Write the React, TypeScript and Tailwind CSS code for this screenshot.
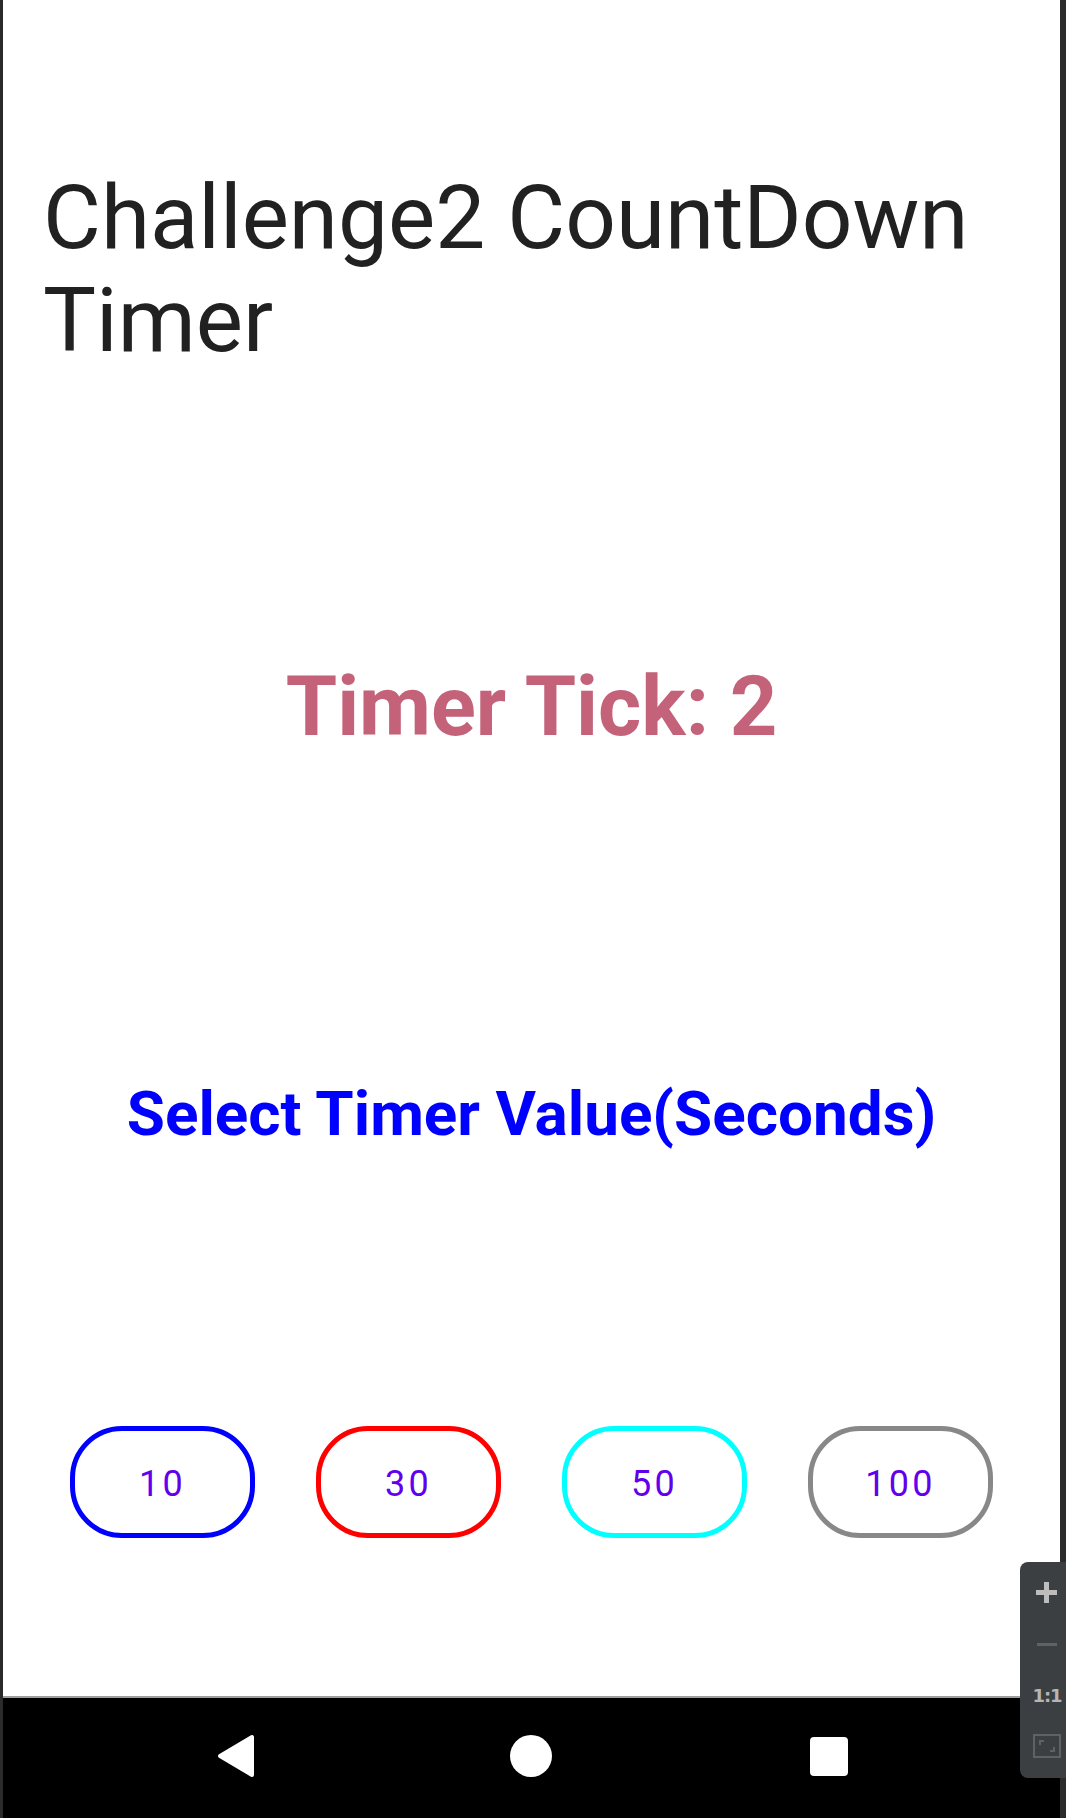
import React from 'react'

const timerOptions = [
  { value: 10, border: 'border-[#0000ff]' },
  { value: 30, border: 'border-[#ff0000]' },
  { value: 50, border: 'border-[#00ffff]' },
  { value: 100, border: 'border-[#888888]' },
]

function NavBar() {
  return (
    <div className="relative h-[122px] w-full bg-black border-t-2 border-[#9e9e9e]">
      <div className="flex h-full items-center pl-[213px]">
        {/* back */}
        <svg width="40" height="44" viewBox="0 0 40 44" className="mt-[-4px]">
          <path d="M4 22 L36 3 L36 41 Z" fill="#fff" stroke="#fff" strokeWidth="4" strokeLinejoin="round" />
        </svg>
        {/* home */}
        <div className="ml-[254px] mt-[-4px] h-[42px] w-[42px] rounded-full bg-white" />
        {/* recents */}
        <div className="ml-[258px] mt-[-4px] h-[39px] w-[38px] rounded-[4px] bg-white" />
      </div>
    </div>
  )
}

function ZoomPanel() {
  return (
    <div className="absolute left-[1020px] top-[1562px] flex h-[216px] w-[46px] flex-col items-center rounded-l-[8px] bg-[#3c3f41] pl-[8px]">
      <svg width="22" height="22" viewBox="0 0 22 22" className="mt-[20px]">
        <rect x="8" y="0" width="5" height="21" fill="#bdbdbd" />
        <rect x="0" y="8" width="21" height="5" fill="#bdbdbd" />
      </svg>
      <div className="mt-[39px] h-[3px] w-[20px] bg-[#5f6163]" />
      <div className="mt-[40px] text-[18px] font-bold leading-[20px] tracking-[-1px] text-[#b5b5b5]" style={{ fontFamily: '"DejaVu Sans", sans-serif' }}>
        1:1
      </div>
      <div className="relative mt-[28px] h-[24px] w-[28px] border-[2px] border-[#5f6163]">
        <div className="absolute left-[4px] top-[4px] h-[5px] w-[5px] border-l-[2px] border-t-[2px] border-[#5f6163]" />
        <div className="absolute bottom-[4px] right-[4px] h-[5px] w-[5px] border-b-[2px] border-r-[2px] border-[#5f6163]" />
      </div>
    </div>
  )
}

export default function App() {
  return (
    <div
      className="relative flex h-[1818px] w-[1066px] overflow-hidden bg-white"
      style={{ fontFamily: 'Roboto, "Noto Sans", sans-serif' }}
    >
      <div className="w-[3px] bg-[#2b2b2b]" />
      <div className="flex flex-1 flex-col">
        <div className="flex flex-1 flex-col">
          <h1 className="pl-[40px] pt-[166px] text-[89px] font-normal leading-[103px] text-[#212121]">
            Challenge2 CountDown
            <br />
            Timer
          </h1>

          <p className="mt-[286px] text-center text-[83px] font-bold leading-[97px] text-[#c4627a]">
            Timer Tick: 2
          </p>

          <p className="mt-[322px] text-center text-[62px] font-bold leading-[73px] text-[#0000ff]">
            Select Timer Value(Seconds)
          </p>

          <div className="mt-[276px] flex gap-[61px] pl-[67px]">
            {timerOptions.map(opt => (
              <button
                key={opt.value}
                className={`flex h-[112px] w-[185px] items-center justify-center rounded-[52px] border-[5px] bg-white pt-[4px] text-[36px] font-normal tracking-[0.09em] text-[#6200ee] ${opt.border}`}
              >
                {opt.value}
              </button>
            ))}
          </div>
        </div>
        <NavBar />
      </div>
      <div className="w-[6px] bg-[#2b2b2b]" />
      <ZoomPanel />
    </div>
  )
}
